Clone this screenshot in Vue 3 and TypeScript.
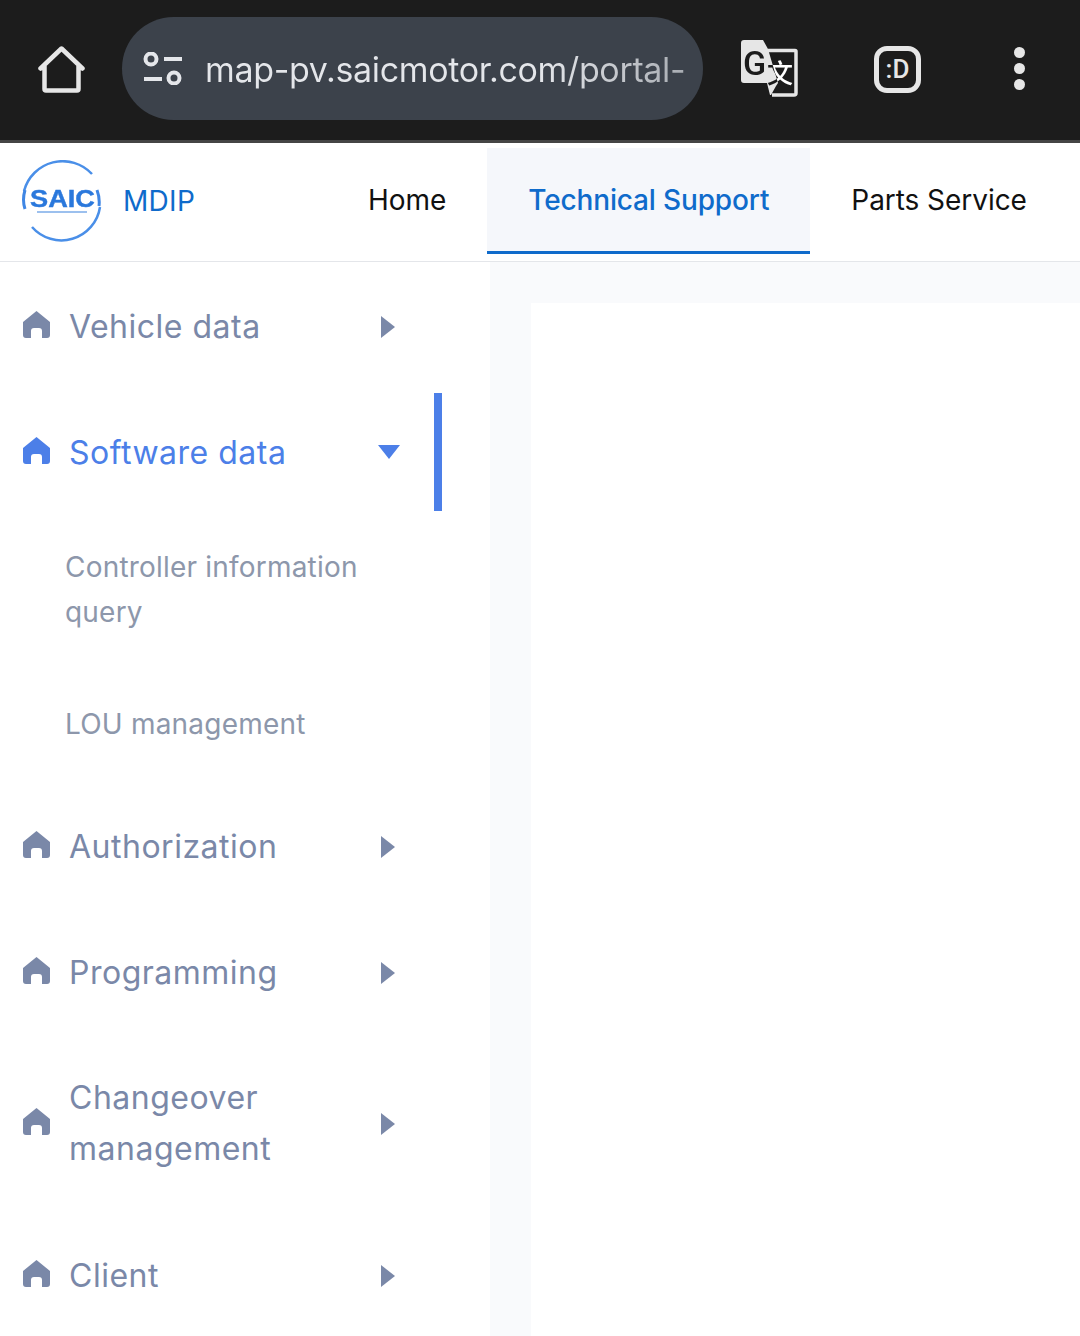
<template>
  <div class="page">
    <div class="browser-bar">
      <svg class="home-btn" width="47" height="47" viewBox="0 0 47 47">
        <path d="M2.500 22.500 23.500 2.500l21 20M6.500 20v23a1.500 1.500 0 0 0 1.500 1.500h31a1.500 1.500 0 0 0 1.500-1.500V20" fill="none" stroke="#e6e6e6" stroke-width="4.500" stroke-linecap="round" stroke-linejoin="round" />
      </svg>
      <div class="url-pill">
        <svg class="tune" width="39" height="33" viewBox="0 0 39 33">
          <circle cx="8" cy="7" r="5.500" fill="none" stroke="#e4e6ea" stroke-width="4" />
          <path d="M21 7h18M1 27h18" stroke="#e4e6ea" stroke-width="4" />
          <circle cx="31" cy="26" r="5.500" fill="none" stroke="#e4e6ea" stroke-width="4" />
        </svg>
        <span class="url">map-pv.saicmotor.com/portal-</span>
      </div>
      <svg class="translate" width="57" height="57" viewBox="0 0 57 57">
        <path d="M27 10.500h27a1 1 0 0 1 1 1V53a2 2 0 0 1-2 2H31" fill="none" stroke="#e6e6e6" stroke-width="3.500" />
        <path d="M3 0h19l5 9 10 34-2 3-5 9h-1l-3-12H3a3 3 0 0 1-3-3V3a3 3 0 0 1 3-3z" fill="#e6e6e6" />
        <text x="2" y="35" class="g-glyph">G</text>
        <text x="26" y="43" class="wen-glyph">文</text>
      </svg>
      <div class="smile"><span>:D</span></div>
      <div class="dots"><i></i><i></i><i></i></div>
    </div>

    <header class="top-nav">
      <div class="brand">
        <svg class="logo" width="82" height="82" viewBox="0 0 82 82">
          <path d="M71 14A40 40 0 0 0 3 31M11 67A39 39 0 0 0 79 47" fill="none" stroke="#4a8fe8" stroke-width="2.500" />
          <path d="M4 30Q1 40 4 49M76 30Q79 38 78 46" fill="none" stroke="#3f86e4" stroke-width="3" />
          <text x="9" y="47" textLength="65" lengthAdjust="spacingAndGlyphs" class="logo-text">SAIC</text>
          <path d="M16 52h50" stroke="#9cc0ee" stroke-width="2" />
        </svg>
        <span class="brand-name">MDIP</span>
      </div>
      <nav class="tabs">
        <a v-for="tab in tabs" :key="tab" class="tab" :class="{ active: tab === 'Technical Support' }">{{ tab }}</a>
      </nav>
    </header>

    <div class="body">
      <aside class="sidebar">
        <template v-for="item in menu" :key="item.label">
          <div class="menu-row" :class="{ open: item.open, tall: item.tall }">
            <svg class="house" width="27" height="27" viewBox="0 0 27 27">
              <path d="M13.500 0 27 11v13a3 3 0 0 1-3 3h-5v-7a3 3 0 0 0-3-3h-5a3 3 0 0 0-3 3v7H3a3 3 0 0 1-3-3V11z" fill="currentColor" />
            </svg>
            <span class="menu-label">{{ item.label }}</span>
            <span class="caret"></span>
          </div>
          <template v-if="item.children">
            <div v-for="sub in item.children" :key="sub" class="sub-row">{{ sub }}</div>
          </template>
        </template>
      </aside>
      <main class="content">
        <div class="card"></div>
      </main>
    </div>
  </div>
</template>

<script setup lang="ts">
interface MenuItem {
  label: string
  open?: boolean
  tall?: boolean
  children?: string[]
}

const tabs = ['Home', 'Technical Support', 'Parts Service']

const menu: MenuItem[] = [
  { label: 'Vehicle data' },
  {
    label: 'Software data',
    open: true,
    children: ['Controller information query', 'LOU management']
  },
  { label: 'Authorization' },
  { label: 'Programming' },
  { label: 'Changeover management', tall: true },
  { label: 'Client' }
]
</script>

<style>
html,
body {
  margin: 0;
  background: #fff;
}
</style>

<style scoped>
.page {
  width: 1080px;
  height: 1336px;
  overflow: hidden;
  display: flex;
  flex-direction: column;
  font-family: Inter, "Noto Sans", sans-serif;
}

.browser-bar {
  height: 140px;
  flex: none;
  display: flex;
  align-items: center;
  padding-left: 38px;
  background: #1c1c1c;
  border-bottom: 3px solid #454545;
}

.home-btn {
  flex: none;
  margin-top: -1px;
}

.url-pill {
  width: 581px;
  height: 103px;
  flex: none;
  margin-left: 37px;
  margin-top: -3px;
  display: flex;
  align-items: center;
  padding-left: 21px;
  box-sizing: border-box;
  border-radius: 52px;
  background: #3c424b;
  overflow: hidden;
}

.tune {
  flex: none;
}

.url {
  margin-left: 23px;
  margin-top: 2px;
  font-family: Inter, sans-serif;
  font-size: 34px;
  letter-spacing: -0.35px;
  white-space: nowrap;
  background: linear-gradient(90deg, #e4e6ea 70%, #a9adb3 100%);
  -webkit-background-clip: text;
  background-clip: text;
  color: transparent;
}

.translate {
  flex: none;
  margin-left: 38px;
  margin-top: -3px;
  isolation: isolate;
}

.g-glyph {
  font-family: Roboto, sans-serif;
  font-size: 34px;
  font-weight: 500;
  fill: #1c1c1c;
}

.wen-glyph {
  font-family: "Noto Sans CJK SC", sans-serif;
  font-size: 26px;
  font-weight: 500;
  fill: #fff;
  mix-blend-mode: difference;
}

.smile {
  width: 47px;
  height: 47px;
  flex: none;
  margin-left: 76px;
  margin-top: -2px;
  box-sizing: border-box;
  display: flex;
  align-items: center;
  justify-content: center;
  border: 5px solid #e6e6e6;
  border-radius: 13px;
  color: #e6e6e6;
  font-family: Roboto, sans-serif;
  font-size: 26px;
  font-weight: 500;
}

.dots {
  flex: none;
  margin-left: 93px;
  margin-top: -3px;
  display: flex;
  flex-direction: column;
  gap: 5px;
}

.dots i {
  width: 11px;
  height: 11px;
  border-radius: 50%;
  background: #e6e6e6;
}

.top-nav {
  height: 119px;
  flex: none;
  box-sizing: border-box;
  display: flex;
  align-items: flex-start;
  background: #fff;
  border-bottom: 1px solid #e4e6ea;
}

.brand {
  width: 327px;
  height: 118px;
  flex: none;
  display: flex;
  align-items: center;
  padding-left: 21px;
  box-sizing: border-box;
}

.logo {
  flex: none;
  margin-top: -2px;
  filter: blur(0.6px);
}

.logo-text {
  font-family: "Liberation Sans", sans-serif;
  font-size: 23px;
  font-weight: 700;
  fill: #2a78dc;
  stroke: #2a78dc;
  stroke-width: 0.400px;
}

.brand-name {
  margin-left: 20px;
  margin-top: -2px;
  font-size: 28px;
  letter-spacing: 0.3px;
  color: #0f6bcb;
}

.tabs {
  display: flex;
  margin-top: 5px;
}

.tab {
  height: 106px;
  box-sizing: border-box;
  padding: 0 41px 2px;
  display: flex;
  align-items: center;
  font-size: 28px;
  letter-spacing: -0.05px;
  color: #111;
  white-space: nowrap;
}

.tab.active {
  padding-bottom: 0;
  color: #0f6bcb;
  font-weight: 500;
  letter-spacing: -0.15px;
  background: #f5f7fb;
  border-bottom: 3px solid #0f6bcb;
}

.body {
  flex: 1;
  min-height: 0;
  display: flex;
}

.sidebar {
  width: 490px;
  flex: none;
  padding-top: 2px;
  background: #fff;
}

.menu-row {
  height: 126px;
  position: relative;
  display: flex;
  align-items: center;
  padding-left: 23px;
  color: #7a88a8;
}

.menu-row.tall {
  height: 175px;
  padding-bottom: 2px;
}

.menu-row.open {
  color: #4c7fe8;
}

.menu-row.open::after {
  content: "";
  position: absolute;
  left: 434px;
  top: 3px;
  width: 8px;
  height: 118px;
  background: #4c7fe8;
}

.house {
  flex: none;
  margin-top: -5px;
}

.menu-label {
  width: 312px;
  margin-left: 19px;
  margin-top: -2px;
  font-size: 32px;
  letter-spacing: 0.5px;
  line-height: 51px;
}

.caret {
  width: 0;
  height: 0;
  border-style: solid;
  border-width: 11px 0 11px 14px;
  border-color: transparent transparent transparent currentColor;
}

.menu-row.open .caret {
  margin-left: -3px;
  margin-top: -3px;
  border-width: 14px 11.500px 0;
  border-color: currentColor transparent transparent;
}

.sub-row {
  width: 310px;
  padding-left: 65px;
  height: 144px;
  display: flex;
  align-items: center;
  padding-top: 2px;
  box-sizing: content-box;
  margin-bottom: -2px;
  font-size: 28px;
  letter-spacing: 0.2px;
  line-height: 45px;
  color: #8d97ab;
}

.sub-row + .sub-row {
  height: 124px;
}

.content {
  flex: 1;
  min-width: 0;
  padding: 41px 0 0 41px;
  background: #f9fafc;
  display: flex;
}

.card {
  flex: 1;
  background: #fff;
}
</style>
